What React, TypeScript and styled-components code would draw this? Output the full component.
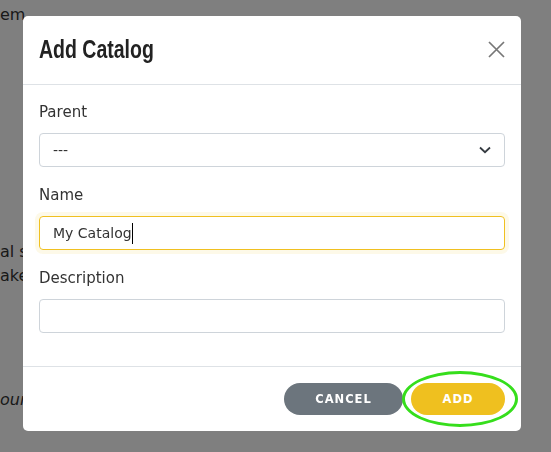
import React from "react";
import styled, { createGlobalStyle } from "styled-components";

const Global = createGlobalStyle`
  html, body { margin: 0; padding: 0; background: #fff; }
  body { font-family: "DejaVu Sans", "Liberation Sans", sans-serif; color: #333; }
  * { box-sizing: border-box; }
`;

const Page = styled.div`
  height: 452px;
  overflow: hidden;
  padding-top: 3px;
  font-size: 16px;
  line-height: 24px;
  color: #333;
  white-space: nowrap;
`;

const Para = styled.p<{ $top: number; $italic?: boolean }>`
  margin: ${(p) => p.$top}px 0 0 0;
  font-style: ${(p) => (p.$italic ? "italic" : "normal")};
`;

const Backdrop = styled.div`
  position: fixed;
  inset: 0;
  background: rgba(0, 0, 0, 0.5);
  display: flex;
  align-items: flex-start;
  padding: 16px 0 0 23px;
`;

const Modal = styled.div`
  width: 498px;
  background: #fff;
  border-radius: 5px;
  display: flex;
  flex-direction: column;
`;

const Header = styled.div`
  height: 69px;
  display: flex;
  align-items: center;
  justify-content: space-between;
  padding: 0 16px 1px 16px;
  border-bottom: 1px solid #dee2e6;
`;

const Title = styled.h2`
  margin: 0;
  width: 116px;
  white-space: nowrap;
  font-family: "Liberation Sans", "Arial", sans-serif;
  font-weight: 700;
  font-size: 26px;
  color: #222;
  transform: scaleX(0.75);
  transform-origin: left center;
`;

const CloseButton = styled.button`
  border: none;
  background: none;
  padding: 0;
  width: 18px;
  height: 18px;
  display: flex;
  align-items: center;
  justify-content: center;
  cursor: pointer;
`;

const Body = styled.div`
  padding: 16px 16px 33px 16px;
  display: flex;
  flex-direction: column;
  gap: 17px;
`;

const Field = styled.div`
  display: flex;
  flex-direction: column;
  gap: 10px;
`;

const Label = styled.label`
  font-size: 15px;
  line-height: 22px;
  color: #333;
`;

const Control = styled.div<{ $focused?: boolean }>`
  height: 34px;
  border: 1px solid ${(p) => (p.$focused ? "#f0c020" : "#ced4da")};
  box-shadow: ${(p) => (p.$focused ? "0 0 0 4px rgba(240, 192, 32, 0.1)" : "none")};
  border-radius: 4px;
  display: flex;
  align-items: center;
  justify-content: space-between;
  padding: 0 13px;
  font-size: 14px;
  color: #333;
`;

const Caret = styled.span`
  display: inline-block;
  width: 1px;
  height: 21px;
  background: #000;
`;

const ValueText = styled.span`
  display: flex;
  align-items: center;
`;

const Footer = styled.div`
  border-top: 1px solid #dee2e6;
  padding: 16px;
  display: flex;
  justify-content: flex-end;
  gap: 8px;
`;

const Button = styled.button<{ $variant: "secondary" | "primary" }>`
  height: 32px;
  border: none;
  border-radius: 16px;
  padding: 0 ${(p) => (p.$variant === "secondary" ? 30 : 31)}px;
  min-width: ${(p) => (p.$variant === "secondary" ? 119 : 94)}px;
  background: ${(p) => (p.$variant === "secondary" ? "#6c757d" : "#efc01f")};
  color: #fff;
  font-family: "DejaVu Sans", sans-serif;
  font-weight: 700;
  font-size: 11.5px;
  letter-spacing: 1px;
  text-transform: uppercase;
  cursor: pointer;
`;

const Highlight = styled.div`
  position: relative;
  display: flex;
`;

const Ring = styled.div`
  position: absolute;
  left: -9px;
  top: -12px;
  width: 116px;
  height: 56px;
  border: 3px solid #36de1c;
  border-radius: 50%;
  pointer-events: none;
`;

export default function App() {
  return (
    <>
      <Global />
      <Page>
        <Para $top={0}>em</Para>
        <Para $top={213}>
          al shop
          <br />
          ake
        </Para>
        <Para $top={100} $italic>
          our
        </Para>
      </Page>
      <Backdrop>
        <Modal>
          <Header>
            <Title>Add Catalog</Title>
            <CloseButton aria-label="Close">
              <svg width="17" height="17" viewBox="0 0 17 17">
                <path d="M1 1 L16 16 M16 1 L1 16" stroke="#777" strokeWidth="1.7" fill="none" />
              </svg>
            </CloseButton>
          </Header>
          <Body>
            <Field>
              <Label>Parent</Label>
              <Control>
                <span>---</span>
                <svg width="12" height="8" viewBox="0 0 12 8">
                  <path d="M1 1.5 L6 6.2 L11 1.5" stroke="#343a40" strokeWidth="1.8" fill="none" />
                </svg>
              </Control>
            </Field>
            <Field>
              <Label>Name</Label>
              <Control $focused>
                <ValueText>
                  My Catalog
                  <Caret />
                </ValueText>
              </Control>
            </Field>
            <Field>
              <Label>Description</Label>
              <Control />
            </Field>
          </Body>
          <Footer>
            <Button $variant="secondary">Cancel</Button>
            <Highlight>
              <Button $variant="primary">Add</Button>
              <Ring />
            </Highlight>
          </Footer>
        </Modal>
      </Backdrop>
    </>
  );
}
